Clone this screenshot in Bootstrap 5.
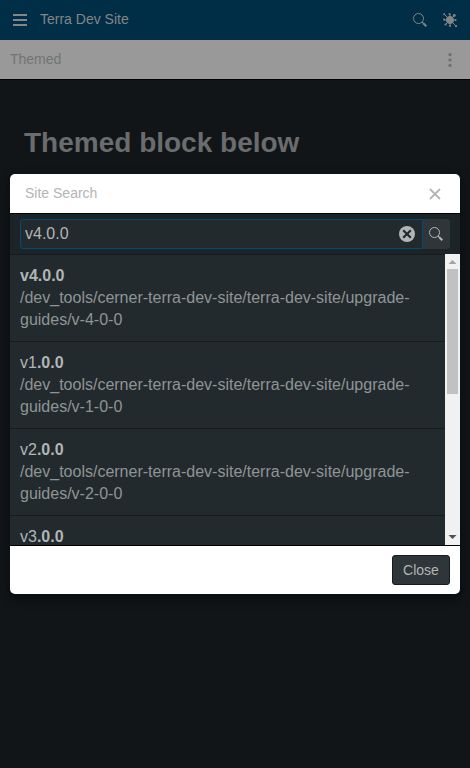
<!DOCTYPE html>
<html lang="en">
<head>
<meta charset="utf-8">
<meta name="viewport" content="width=device-width, initial-scale=1">
<title>Terra Dev Site</title>
<link rel="stylesheet" href="https://cdn.jsdelivr.net/npm/bootstrap@5.3.0/dist/css/bootstrap.min.css">
<style>
body{font-family:"Liberation Sans",Arial,sans-serif;font-size:14px;line-height:20px;background:#111518;height:100vh;overflow:hidden}
svg{display:block;flex:none}
.app-bar{height:40px;background:#002e47;color:#858585;padding:0 13px 2px 13px}
.app-bar svg{margin-top:2px}
.app-bar .title{margin-left:13px}
.app-bar .sun{margin-left:16px}
.page-bar{height:40px;background:#999;border-bottom:1px solid #000;color:#717475;padding:0 18px 1px 10px}
.page-bar svg{margin-top:1px}
.page-title{font-size:28px;line-height:34px;font-weight:700;color:#6b6c6d;margin:46px 24px 0}
.search-dialog{left:10px;right:10px;top:174px;height:420px;border-radius:5px;background:#fff;box-shadow:0 4px 8px 2px rgba(0,0,0,.35);overflow:hidden}
.dialog-head{height:40px;border-bottom:1px solid #000;color:#b2b5b6;padding:0 19px 1px 15px}
.dialog-head svg{margin-top:1px}
.search-row{height:40px;background:#1d2427;padding:5px 10px}
.query{height:30px;border:1px solid #004c76;border-radius:3px 0 0 3px;background:#222a2d;color:#b2b5b6;font-size:16px;padding:0 7px 0 4px}
.query input{background:none;border:0;outline:0;color:inherit;padding:0;min-width:0}
.go{width:27px;height:30px;background:#2f363a;border:0;border-radius:0 3px 3px 0;padding:0 2px 0 0}
.results{height:291px;background:#222a2d;overflow:hidden}
.result{height:87px;border-top:1px solid #181b1d;padding:10px;font-size:16px;line-height:22px;color:#b2b5b6}
.result .path{color:#909496}
.track{width:15px;background:#f1f1f1}
.thumb{width:11px;height:125px;background:#c1c1c1}
.dialog-foot{height:49px;border-top:1px solid #000;padding:0 10px}
.close-btn{width:58px;height:30px;border:1px solid #181b1d;border-radius:3px;background:#2f363a;color:#b2b5b6;font-size:14px;line-height:20px;padding:0}
</style>
<script src="https://cdn.jsdelivr.net/npm/bootstrap@5.3.0/dist/js/bootstrap.bundle.min.js"></script>
</head>
<body>
<header class="app-bar d-flex align-items-center">
  <svg width="14" height="12" viewBox="0 0 14 12" fill="#858585"><path d="M0 0h14v2H0zM0 5h14v2H0zM0 10h14v2H0z"/></svg>
  <span class="title">Terra Dev Site</span>
  <svg class="ms-auto" width="14" height="14" viewBox="0 0 14 14" fill="none" stroke="#858585"><circle cx="5.5" cy="5.5" r="5"/><path d="M9 9l1 1"/><path d="M10 10l3.3 3.3" stroke-width="2"/></svg>
  <svg class="sun" width="14" height="14" viewBox="0 0 14 14" fill="#858585" stroke="#858585"><circle cx="7" cy="7" r="3.6"/><path d="M7 1v12M1 7h12M1.5 1.5l11 11M11 3l-8.3 8.3"/><g stroke="none"><circle cx="11.3" cy="2.5" r="1.4"/><circle cx="13" cy="13" r="1.1"/><circle cx="1.1" cy="1.2" r="1"/><circle cx="2.5" cy="11.5" r="1.1"/><circle cx="6.5" cy="1" r="1"/><circle cx="7" cy="13" r="1"/><circle cx="1" cy="6.5" r="1"/><circle cx="12.7" cy="7" r=".9"/></g></svg>
</header>
<div class="page-bar d-flex align-items-center justify-content-between">
  <span>Themed</span>
  <svg width="4" height="14" viewBox="0 0 4 14" fill="#6b6d6e"><circle cx="2" cy="1.6" r="1.6"/><circle cx="2" cy="7" r="1.6"/><circle cx="2" cy="12.4" r="1.6"/></svg>
</div>
<main><h1 class="page-title">Themed block below</h1></main>
<section class="search-dialog position-absolute d-flex flex-column" role="dialog" aria-label="Site Search">
  <div class="dialog-head d-flex align-items-center justify-content-between">
    <span>Site Search</span>
    <svg width="12" height="12" viewBox="0 0 12 12" stroke="#b2b5b6" stroke-width="1.8"><path d="M1 1l10 10M11 1L1 11"/></svg>
  </div>
  <div class="search-row d-flex">
    <div class="query d-flex align-items-center flex-grow-1">
      <input class="flex-grow-1" type="text" value="v4.0.0" aria-label="Search">
      <svg width="16" height="16" viewBox="0 0 16 16"><circle cx="8" cy="8" r="8" fill="#b2b5b6"/><path d="M4.2 4.2l7.6 7.6M11.8 4.2l-7.6 7.6" stroke="#222a2d" stroke-width="2.2"/></svg>
    </div>
    <button class="go d-flex align-items-center justify-content-center" type="button" aria-label="Search">
      <svg width="14" height="14" viewBox="0 0 14 14" fill="none" stroke="#b2b5b6"><circle cx="5.5" cy="5.5" r="5"/><path d="M9 9l1 1"/><path d="M10 10l3.3 3.3" stroke-width="2"/></svg>
    </button>
  </div>
  <div class="results d-flex">
    <div class="flex-grow-1">
      <div class="result"><div><b>v4.0.0</b></div><div class="path">/dev_tools/cerner-terra-dev-site/terra-dev-site/upgrade-guides/v-4-0-0</div></div>
      <div class="result"><div>v1<b>.0.0</b></div><div class="path">/dev_tools/cerner-terra-dev-site/terra-dev-site/upgrade-guides/v-1-0-0</div></div>
      <div class="result"><div>v2<b>.0.0</b></div><div class="path">/dev_tools/cerner-terra-dev-site/terra-dev-site/upgrade-guides/v-2-0-0</div></div>
      <div class="result"><div>v3<b>.0.0</b></div></div>
    </div>
    <div class="track d-flex flex-column align-items-center flex-shrink-0">
      <svg width="15" height="15" viewBox="0 0 15 15" fill="#a3a3a3"><path d="M3.5 10l4-4 4 4z"/></svg>
      <div class="thumb"></div>
      <svg class="mt-auto" width="15" height="15" viewBox="0 0 15 15" fill="#505050"><path d="M3.5 5l4 4 4-4z"/></svg>
    </div>
  </div>
  <div class="dialog-foot d-flex align-items-center justify-content-end">
    <button class="close-btn" type="button">Close</button>
  </div>
</section>
</body>
</html>
